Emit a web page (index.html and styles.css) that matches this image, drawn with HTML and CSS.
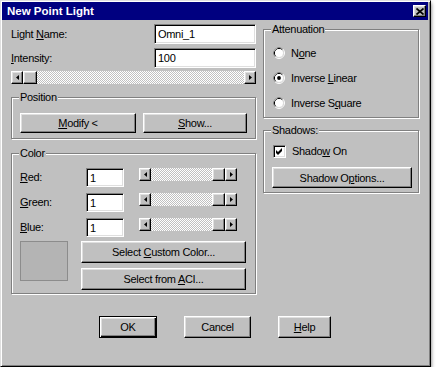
FILE: index.html
```html
<!DOCTYPE html>
<html>
<head>
<meta charset="utf-8">
<link rel="stylesheet" href="styles.css">
</head>
<body>
<div class="window">
  <div class="titlebar">
    <span class="title">New Point Light</span>
    <span class="close raised"><svg width="8" height="7" viewBox="0 0 8 7"><path d="M0.5 0.5 L7.5 6.5 M7.5 0.5 L0.5 6.5" stroke="#000" stroke-width="1.7"/></svg></span>
  </div>
  <div class="client">
    <div class="left">
      <div class="field-row"><span>Light <u>N</u>ame:</span><span class="input input-name">Omni_1</span></div>
      <div class="field-row"><span><u>I</u>ntensity:</span><span class="input input-name">100</span></div>
      <div class="sb sb-wide">
        <span class="sb-btn raised"><svg width="3" height="5" viewBox="0 0 3 5"><polygon points="3,0 0,2.5 3,5" fill="#000"/></svg></span>
        <span class="sb-track"><span class="sb-thumb raised"></span></span>
        <span class="sb-btn raised"><svg width="3" height="5" viewBox="0 0 3 5"><polygon points="0,0 3,2.5 0,5" fill="#000"/></svg></span>
      </div>
      <fieldset class="group grp-position">
        <legend>Position</legend>
        <div class="btn-row">
          <button class="btn btn-modify"><u>M</u>odify &lt;</button>
          <button class="btn btn-show"><u>S</u>how...</button>
        </div>
      </fieldset>
      <fieldset class="group grp-color">
        <legend>Color</legend>
        <div class="rgb-row">
          <span class="rgb-label"><u>R</u>ed:</span>
          <span class="input input-rgb">1</span>
          <div class="sb sb-rgb">
            <span class="sb-btn raised"><svg width="3" height="5" viewBox="0 0 3 5"><polygon points="3,0 0,2.5 3,5" fill="#000"/></svg></span>
            <span class="sb-track"><span class="sb-thumb raised"></span></span>
            <span class="sb-btn raised"><svg width="3" height="5" viewBox="0 0 3 5"><polygon points="0,0 3,2.5 0,5" fill="#000"/></svg></span>
          </div>
        </div>
        <div class="rgb-row">
          <span class="rgb-label"><u>G</u>reen:</span>
          <span class="input input-rgb">1</span>
          <div class="sb sb-rgb">
            <span class="sb-btn raised"><svg width="3" height="5" viewBox="0 0 3 5"><polygon points="3,0 0,2.5 3,5" fill="#000"/></svg></span>
            <span class="sb-track"><span class="sb-thumb raised"></span></span>
            <span class="sb-btn raised"><svg width="3" height="5" viewBox="0 0 3 5"><polygon points="0,0 3,2.5 0,5" fill="#000"/></svg></span>
          </div>
        </div>
        <div class="rgb-row">
          <span class="rgb-label"><u>B</u>lue:</span>
          <span class="input input-rgb">1</span>
          <div class="sb sb-rgb">
            <span class="sb-btn raised"><svg width="3" height="5" viewBox="0 0 3 5"><polygon points="3,0 0,2.5 3,5" fill="#000"/></svg></span>
            <span class="sb-track"><span class="sb-thumb raised"></span></span>
            <span class="sb-btn raised"><svg width="3" height="5" viewBox="0 0 3 5"><polygon points="0,0 3,2.5 0,5" fill="#000"/></svg></span>
          </div>
        </div>
        <div class="swatch-row">
          <div class="swatch"></div>
          <div class="swatch-btns">
            <button class="btn btn-tall">Select <u>C</u>ustom Color...</button>
            <button class="btn btn-tall">Select from <u>A</u>CI...</button>
          </div>
        </div>
      </fieldset>
    </div>
    <div class="right">
      <fieldset class="group grp-atten">
        <legend>Attenuation</legend>
        <div class="radio-row">
          <svg class="radio" width="12" height="12" viewBox="0 0 12 12"><circle cx="6" cy="6" r="5.5" fill="none" stroke="#fff"/><path d="M2.11 9.89 A5.5 5.5 0 0 1 9.89 2.11" fill="none" stroke="#808080"/><circle cx="6" cy="6" r="4.5" fill="none" stroke="#dfdfdf"/><path d="M2.82 9.18 A4.5 4.5 0 0 1 9.18 2.82" fill="none" stroke="#000"/><circle cx="6" cy="6" r="4" fill="#fff"/></svg>
          <span>N<u>o</u>ne</span>
        </div>
        <div class="radio-row">
          <svg class="radio" width="12" height="12" viewBox="0 0 12 12"><circle cx="6" cy="6" r="5.5" fill="none" stroke="#fff"/><path d="M2.11 9.89 A5.5 5.5 0 0 1 9.89 2.11" fill="none" stroke="#808080"/><circle cx="6" cy="6" r="4.5" fill="none" stroke="#dfdfdf"/><path d="M2.82 9.18 A4.5 4.5 0 0 1 9.18 2.82" fill="none" stroke="#000"/><circle cx="6" cy="6" r="4" fill="#fff"/><circle cx="6" cy="6" r="1.9" fill="#000"/></svg>
          <span>Inverse <u>L</u>inear</span>
        </div>
        <div class="radio-row">
          <svg class="radio" width="12" height="12" viewBox="0 0 12 12"><circle cx="6" cy="6" r="5.5" fill="none" stroke="#fff"/><path d="M2.11 9.89 A5.5 5.5 0 0 1 9.89 2.11" fill="none" stroke="#808080"/><circle cx="6" cy="6" r="4.5" fill="none" stroke="#dfdfdf"/><path d="M2.82 9.18 A4.5 4.5 0 0 1 9.18 2.82" fill="none" stroke="#000"/><circle cx="6" cy="6" r="4" fill="#fff"/></svg>
          <span>Inverse S<u>q</u>uare</span>
        </div>
      </fieldset>
      <fieldset class="group grp-shadow">
        <legend>Shadows:</legend>
        <div class="check-row">
          <span class="checkbox"><svg width="9" height="9" viewBox="0 0 9 9"><polygon points="1,3 3,5 7,1 7,4 3,8 1,6" fill="#000"/></svg></span>
          <span>Shado<u>w</u> On</span>
        </div>
        <button class="btn btn-options">Shadow O<u>p</u>tions...</button>
      </fieldset>
    </div>
  </div>
  <div class="footer">
    <button class="btn btn-default btn-ok">OK</button>
    <button class="btn btn-cancel">Cancel</button>
    <button class="btn btn-help"><u>H</u>elp</button>
  </div>
</div>
</body>
</html>
```

FILE: styles.css
```css
* { box-sizing: border-box; }

body {
  margin: 0;
  background: #ffffff;
  font-family: "Liberation Sans", Arial, sans-serif;
  font-size: 11px;
  letter-spacing: -0.3px;
  color: #000;
}

u { text-decoration: underline; text-underline-offset: 1px; }

.raised {
  background: #c0c0c0;
  border: 1px solid;
  border-color: #fff #000 #000 #fff;
  box-shadow: inset -1px -1px #808080, inset 1px 1px #dfdfdf;
}

.window {
  width: 431px;
  height: 367px;
  background: #c0c0c0;
  border: 1px solid;
  border-color: #dfdfdf #000 #000 #dfdfdf;
  box-shadow: inset 1px 1px #fff, inset -1px -1px #808080, 0 3px 4px rgba(0, 0, 0, 0.6);
  padding: 1px 2px 2px 1px;
  display: flex;
  flex-direction: column;
}

.titlebar {
  height: 18px;
  background: #000080;
  color: #fff;
  display: flex;
  align-items: center;
  justify-content: space-between;
  padding: 0 2px 0 5px;
}

.title {
  font-weight: bold;
  font-size: 11.5px;
  letter-spacing: 0;
}

.close {
  width: 13px;
  height: 12px;
  display: flex;
  align-items: center;
  justify-content: center;
}

.client {
  display: flex;
  gap: 7px;
  padding: 4px 9px 0 9px;
}

.left {
  width: 245px;
  display: flex;
  flex-direction: column;
}

.right {
  width: 156px;
  display: flex;
  flex-direction: column;
  margin-top: -1px;
}

.field-row {
  display: flex;
  justify-content: space-between;
  align-items: center;
  height: 20px;
}

.field-row + .field-row { margin-top: 4px; }

.input {
  background: #fff;
  border: 1px solid;
  border-color: #808080 #fff #fff #808080;
  box-shadow: inset 1px 1px #000, inset -1px -1px #dfdfdf;
  padding: 0 3px;
  display: flex;
  align-items: center;
  height: 20px;
}

.input-name { width: 102px; }

.sb {
  display: flex;
  height: 13px;
}

.sb-wide { margin-top: 3px; }

.sb-btn {
  width: 12px;
  height: 13px;
  display: flex;
  align-items: center;
  justify-content: center;
}

.sb-track {
  flex: 1;
  display: flex;
  background-color: #c0c0c0;
  background-image: conic-gradient(#fff 25%, #c0c0c0 0 50%, #fff 0 75%, #c0c0c0 0);
  background-size: 2px 2px;
}

.sb-thumb {
  width: 14px;
  height: 13px;
}

.sb-rgb .sb-track { justify-content: flex-end; }
.sb-rgb .sb-thumb { width: 13px; }

.group {
  margin: 0;
  min-width: 0;
  border: 1px solid #808080;
  box-shadow: 1px 1px 0 #fff, inset 1px 1px 0 #fff;
  padding: 8px 8px 5px 8px;
}

.group legend {
  padding: 0 1px;
  margin-left: -1px;
  line-height: 13px;
  background: #c0c0c0;
}

.grp-position {
  margin-top: 7px;
  padding-top: 9px;
}

.btn-row {
  display: flex;
  gap: 7px;
}

.btn {
  font-family: inherit;
  font-size: 11px;
  letter-spacing: -0.3px;
  color: #000;
  padding: 0;
  height: 20px;
  background: #c0c0c0;
  border: 1px solid;
  border-color: #fff #000 #000 #fff;
  box-shadow: inset -1px -1px #808080, inset 1px 1px #dfdfdf;
}

.btn-modify { width: 116px; }
.btn-show { flex: 1; }

.grp-color {
  margin-top: 8px;
  padding-top: 8px;
  padding-bottom: 3px;
}

.rgb-row {
  display: flex;
  align-items: flex-start;
  height: 19px;
}

.rgb-row + .rgb-row { margin-top: 6px; }

.rgb-label {
  width: 66px;
  line-height: 19px;
}

.input-rgb {
  width: 38px;
  height: 19px;
}

.sb-rgb {
  width: 98px;
  margin-left: 15px;
}

.swatch-row {
  display: flex;
  margin-top: 4px;
}

.swatch {
  width: 48px;
  height: 40px;
  background: #b4b4b4;
  border: 1px solid #8c8c8c;
}

.swatch-btns {
  margin-left: 13px;
  width: 165px;
  display: flex;
  flex-direction: column;
  gap: 5px;
}

.btn-tall { height: 22px; }

.grp-atten {
  padding-top: 9px;
  padding-bottom: 6px;
}

.radio-row {
  display: flex;
  align-items: center;
  height: 16px;
  gap: 6px;
}

.radio-row + .radio-row { margin-top: 9px; }

.radio { margin-left: 1px; flex: none; }

.grp-shadow {
  margin-top: 6px;
  padding-top: 6px;
  padding-bottom: 4px;
}

.check-row {
  display: flex;
  align-items: center;
  height: 16px;
  gap: 6px;
}

.checkbox {
  width: 13px;
  height: 13px;
  margin-left: 1px;
  background: #fff;
  border: 1px solid;
  border-color: #808080 #fff #fff #808080;
  box-shadow: inset 1px 1px #000, inset -1px -1px #dfdfdf;
  display: flex;
  align-items: center;
  justify-content: center;
}

.btn-options {
  display: block;
  width: 140px;
  height: 21px;
  margin-top: 8px;
}

.footer {
  display: flex;
  gap: 27px;
  padding-left: 97px;
  margin-top: 22px;
}

.footer .btn { height: 22px; }

.btn-default {
  border-color: #000;
  box-shadow: inset 1px 1px #fff, inset -1px -1px #000, inset -2px -2px #808080, inset 2px 2px #dfdfdf;
}

.btn-ok { width: 58px; }
.btn-cancel { width: 67px; }
.btn-help { width: 53px; }
```
